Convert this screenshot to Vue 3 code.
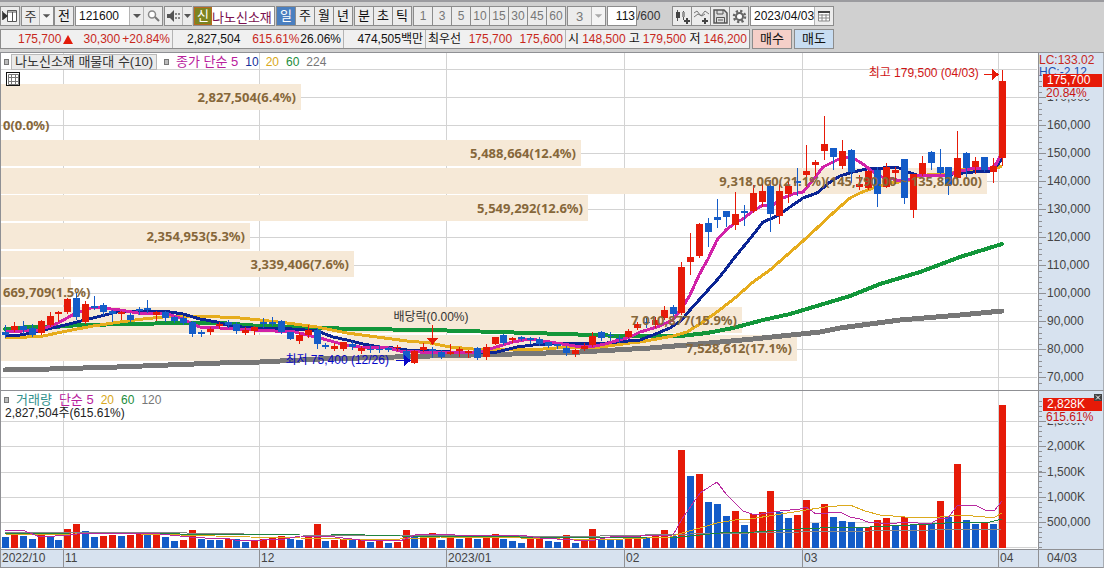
<script setup>
import { ref } from 'vue'

const PLOT_W = 1038
const PRICE_TOP = 53
const VOL_TOP = 391

const code = ref('121600')
const stockName = ref('나노신소재')
const count = ref('113')
const date = ref('2023/04/03')

const periods = ['일', '주', '월', '년']
const intraday = ['분', '초', '틱']
const minutes = ['1', '3', '5', '10', '15', '30', '45', '60']

// direction, high, body top, body bottom, low
const candles = `
B325,332,335,337 R322,326,330,331 B321,326,330,333 B324,328,335,336 R320,321,333,334
R312,316,325,326 R311,312,314,321 R298,299,312,313 B293,298,317,319 R301,304,322,323
B296,306,308,309 B303,305,312,315 B310,311,314,321 R311,312,314,319 B313,315,320,321
B307,309,311,314 B300,308,310,312 R311,312,315,320 B311,312,318,321 B316,317,321,322
B316,318,323,324 B321,322,334,336 B330,332,334,336 R327,329,332,334 R322,324,326,328
B320,322,325,327 B322,324,331,333 R327,330,333,334 R326,327,331,334 B318,322,324,327
B317,322,324,325 B320,321,332,333 B332,332,339,339 R332,335,341,343 R325,330,335,337
B328,330,344,348 B343,345,347,348 R343,346,349,350 R342,342,349,350 B341,344,347,349
R346,348,351,353 B345,349,350,352 B345,349,350,352 B347,348,350,351 R345,347,348,350
B350,351,359,362 R350,351,363,363 R343,347,350,351 B347,349,351,357 B350,352,357,358
R344,352,354,354 R347,349,351,356 R350,351,353,357 B347,348,358,359 R344,347,357,359
R337,337,344,344 B334,335,343,344 R337,338,340,342 B336,337,339,340 B337,338,340,343
B337,339,344,345 B342,342,346,347 B344,344,346,348 B346,348,353,355 R349,350,354,356
R343,346,349,350 R332,336,345,346 B331,332,338,340 B332,335,336,340 B335,338,339,342
R329,331,337,337 R322,324,328,329 B318,322,323,327 R317,320,325,327 R306,310,318,319
B305,307,314,316 R262,267,313,314 R233,257,262,274 R223,224,256,257 B218,223,232,246
B199,217,220,227 B211,211,217,226 R192,214,225,229 B205,211,213,225 R185,193,211,212
R184,191,202,206 B180,186,214,231 R184,191,216,223 R178,186,194,202 B168,181,183,195
R145,171,175,186 R160,162,165,175 R116,144,151,159 B148,148,157,169 R140,151,166,168
B149,150,172,182 R175,184,187,189 R170,171,188,189 B167,170,194,206 R163,167,187,187
R167,170,173,183 B159,159,198,203 R174,174,210,217 R156,163,174,175 B151,152,163,169
B149,167,173,173 B167,167,185,194 R131,158,178,178 B152,153,168,178 R157,161,167,173
B157,157,170,171 R158,166,172,182 R70,81,158,165`.trim().split(/\s+/).map((s, i) => {
  const [high, top, bottom, low] = s.slice(1).split(',').map(Number)
  return { x: Math.round(2 + i * 8.9), up: s[0] === 'R', high, top, bottom, low }
})

const volumes = `
B537 R535 B536 B539 R533 B536 B540 R529 R524 B531 B537 R536 R535 B536 R535 R534 B534 R532 B537 B541
R540 R530 B539 B540 B540 R539 B539 B542 R541 R539 R538 R536 B539 B540 R536 R524 B541 R540 R539 B540
R539 B542 R541 B543 R542 R530 B537 R534 R533 B540 R538 B539 R538 B539 R538 R534 B539 B541 B543 R539
R538 B541 B542 R535 B543 R540 R529 B539 B539 B540 R536 R536 B538 R536 R530 B536 R450 B476 R474 B502
B504 B516 R511 B525 R514 R512 R491 B512 B518 R515 R500 B523 R504 B517 B521 B522 B527 R527 R520 R518
B526 R517 B524 R523 B524 R501 B517 R464 B520 B524 R523 B524 R405`.trim().split(/\s+/).map((s, i) => ({
  x: Math.round(2 + i * 8.9), up: s[0] === 'R', top: Number(s.slice(1)),
}))

const priceLines = [
  { cls: 'ma224', pts: '5,370 50,369 117,367 220,363 260,362 320,359 360,358 430,356 513,354 580,352 650,348 687,345 753,339 820,332 840,328 870,324 900,320 960,315 1002,311' },
  { cls: 'ma60', pts: '5,329 30,327 53,327 80,325 133,324 177,323 220,323 260,326 297,327 353,329 430,330 497,332 563,334 623,336 680,336 707,333 733,328 763,320 790,314 820,305 850,296 880,284 920,272 960,257 1002,244' },
  { cls: 'ma20', pts: '5,338 27,337 43,336 67,331 93,326 120,322 143,319 163,317 183,316 220,317 240,318 260,320 287,323 317,327 347,333 377,337 407,341 430,343 450,347 473,349 543,349 570,347 600,347 630,343 640,342 673,336 687,332 703,322 717,312 735,298 753,282 770,270 787,255 803,241 817,228 833,213 850,198 860,193 873,188 890,183 907,181 917,177 933,174 950,174 960,170 980,169 997,168 1002,166' },
  { cls: 'ma10', pts: '5,335 20,335 32,333 43,330 57,327 77,322 97,317 117,312 133,311 150,311 170,312 183,314 200,319 217,322 230,326 253,328 280,328 317,331 333,337 347,340 363,344 380,347 393,348 407,350 430,351 450,352 497,352 517,347 533,345 563,343 597,344 617,342 640,340 653,335 670,328 682,320 690,310 699,300 708,290 717,280 726,269 735,257 753,235 763,222 777,216 790,207 803,198 817,193 830,182 840,176 853,172 867,169 883,168 897,167 907,172 917,175 940,176 953,174 973,172 990,171 997,166 1002,158' },
  { cls: 'ma5', pts: '5,332 40,330 58,323 76,313 94,307 120,310 138,313 165,313 180,318 200,327 220,328 255,330 295,332 320,338 345,345 360,347 385,347 400,351 420,352 480,352 496,347 513,342 530,339 550,342 575,346 590,347 605,344 630,337 640,332 657,327 673,320 682,308 690,295 699,275 708,259 717,240 726,230 735,223 743,219 753,211 763,205 773,205 783,198 793,194 803,192 813,180 823,167 833,162 843,157 853,158 863,164 873,172 882,177 890,178 900,181 910,179 917,175 933,175 943,176 957,172 970,169 983,168 992,168 997,163 1002,152' },
]
const volumeLines = [
  { cls: 'v120', pts: '5,532 130,532 300,535 520,536 600,536 690,534 750,533 800,532 870,531 930,530 1002,529' },
  { cls: 'v60', pts: '5,534 70,533 130,533 230,535 300,534 330,534 400,536 520,537 600,537 670,538 690,536 720,533 755,532 780,530 820,528 870,527 930,524 960,522 990,522 1002,519' },
  { cls: 'v20', pts: '5,534 50,535 100,533 180,535 250,537 300,538 380,540 440,537 520,538 600,540 670,537 682,533 700,528 717,523 735,520 750,519 775,515 800,511 825,507 850,505 865,511 880,515 905,517 940,517 960,515 985,517 995,517 1002,513' },
  { cls: 'v5', pts: '5,531 22,530 30,533 40,537 70,535 85,533 130,533 160,534 190,537 205,538 225,538 240,541 285,539 300,536 335,537 360,540 400,541 415,535 440,534 470,536 520,535 540,538 590,541 610,537 640,536 673,535 682,519 700,493 717,482 726,494 743,511 755,515 780,511 800,509 806,507 816,514 840,512 850,517 860,519 868,522 890,524 905,522 930,524 940,518 948,518 957,506 975,505 985,510 994,511 1002,501' },
]

// volume-by-price bands: top, right edge, caption
const bands = [
  { y: 84, end: 300, text: '2,827,504(6.4%)' },
  { y: 112, end: 0, text: '0(0.0%)' },
  { y: 140, end: 580, text: '5,488,664(12.4%)' },
  { y: 168, end: 986, text: '9,318,060(21.1%)(145,790.00 ~ 135,820.00)' },
  { y: 195, end: 587, text: '5,549,292(12.6%)' },
  { y: 223, end: 249, text: '2,354,953(5.3%)' },
  { y: 251, end: 353, text: '3,339,406(7.6%)' },
  { y: 279, end: 70, text: '669,709(1.5%)' },
  { y: 307, end: 741, text: '7,010,877(15.9%)' },
  { y: 335, end: 796, text: '7,528,612(17.1%)' },
]
const months = [
  { x: 0, text: '2022/10' }, { x: 63, text: '11' }, { x: 259, text: '12' },
  { x: 446, text: '2023/01' }, { x: 624, text: '02' }, { x: 802, text: '03' }, { x: 998, text: '04' },
]
const priceGrid = Array.from({ length: 12 }, (_, i) => 69 + i * 28)
const volumeGrid = [421, 446, 472, 497, 522, 547]
const priceTicks = Array.from({ length: 11 }, (_, i) => ({ y: 97 + i * 28, text: `${170 - i * 10},000` }))
const volumeTicks = [
  { y: 421, text: '2,500K' }, { y: 446, text: '2,000K' }, { y: 472, text: '1,500K' },
  { y: 497, text: '1,000K' }, { y: 522, text: '500,000' },
]
const priceMinor = Array.from({ length: 56 }, (_, i) => Math.round(75 + i * 5.6))
const volumeMinor = Array.from({ length: 30 }, (_, i) => Math.round(547 - i * 5.04))

const pct = x => `${(x / PLOT_W) * 100}%`
function bandStyle(b) {
  const top = `${b.y + 4 - PRICE_TOP}px`
  return b.end < 100 ? { top, left: '3px' } : { top, right: `${((PLOT_W - b.end + 4) / PLOT_W) * 100}%` }
}
</script>

<template>
  <main class="app">
    <header class="head">
      <div class="toolbar">
        <button class="btn w20" aria-label="패널">
          <svg width="16" height="14" viewBox="0 0 16 14"><path d="M5.500 1.500h9v11h-9zM5 3h10M10.500 3v10" fill="#fff" stroke="#555" /><path d="M.5 2v9" stroke="#555" /><path d="M1 3l5 4-5 4z" fill="#333" /></svg>
        </button>
        <div class="combo w33 gap">
          <select class="pick" aria-label="종류"><option>주</option></select>
          <svg class="arrow" width="14" height="18" viewBox="0 0 14 18"><path d="M3 7h8l-4 4z" fill="#555" /></svg>
        </div>
        <button class="btn w20">전</button>
        <div class="combo w88 gap">
          <input v-model="code" class="field" aria-label="종목코드" />
          <button class="part" aria-label="목록"><svg width="13" height="18" viewBox="0 0 13 18"><path d="M3 7h8l-4 4z" fill="#555" /></svg></button>
          <button class="part wide" aria-label="검색"><svg width="16" height="16" viewBox="0 0 16 16"><circle cx="7" cy="6.500" r="3.500" fill="#fff" stroke="#888" stroke-width="1.500" /><path d="M10 9l4 4" stroke="#777" stroke-width="2" /></svg></button>
        </div>
        <div class="combo w28 gap">
          <button class="part wide" aria-label="소리"><svg width="16" height="16" viewBox="0 0 16 16"><path d="M1 6h3l4-4v12l-4-4H1z" fill="#555" /><path d="M10 5v2M10 9v2M13 5v2M13 9v2" stroke="#666" stroke-width="1.500" /></svg></button>
          <button class="part" aria-label="소리 설정"><svg width="9" height="18" viewBox="0 0 9 18"><path d="M1 7h7l-3.500 4z" fill="#555" /></svg></button>
        </div>
        <div class="combo w82 gap">
          <span class="mark">신</span>
          <input v-model="stockName" class="field name" aria-label="종목명" />
        </div>
        <div class="group gap"><button v-for="(p, i) in periods" :key="p" class="seg" :class="{ on: i === 0 }">{{ p }}</button></div>
        <div class="group gap"><button v-for="p in intraday" :key="p" class="seg">{{ p }}</button></div>
        <div class="group gap"><button v-for="m in minutes" :key="m" class="seg dim">{{ m }}</button></div>
        <div class="combo w39 gap">
          <select class="pick dim" aria-label="분 단위"><option>3</option></select>
          <svg class="arrow" width="14" height="18" viewBox="0 0 14 18"><path d="M3 7h8l-4 4z" fill="#aaa" /></svg>
        </div>
        <label class="count gap"><input v-model="count" class="field boxed" /><span>/600</span></label>
        <div class="group">
          <button class="seg" aria-label="봉 추가"><svg width="17" height="17" viewBox="0 0 17 17"><path d="M3.500 2v11M9.500 3v9" stroke="#555" /><path d="M2 4h4v6H2z" fill="#444" /><path d="M8 4h3v5H8z" fill="#999" /><path d="M10 13h6M13 10v6" stroke="#444" stroke-width="2" /></svg></button>
          <button class="seg" aria-label="지표 추가"><svg width="17" height="17" viewBox="0 0 17 17"><path d="M1 5l3-2 4 5 4-5 4 3M1 9l4-3 4 2 3-2" fill="none" stroke="#777" /><path d="M9 13h6M12 10v6" stroke="#444" stroke-width="2" /></svg></button>
          <button class="seg" aria-label="저장"><svg width="17" height="17" viewBox="0 0 17 17"><path d="M2 2h10l3 3v10H2z" fill="#ddd" stroke="#555" stroke-width="1.500" /><path d="M5 2v4h6V2M4.500 15V9.500h8V15M6 12h5" fill="none" stroke="#555" /></svg></button>
          <button class="seg" aria-label="설정"><svg width="17" height="17" viewBox="0 0 17 17"><circle cx="8.500" cy="8.500" r="5.500" fill="none" stroke="#666" stroke-width="2.500" stroke-dasharray="2.200 2.120" /><circle cx="8.500" cy="8.500" r="3.500" fill="#fff" stroke="#666" stroke-width="2" /></svg></button>
        </div>
        <div class="combo w84 gap">
          <input v-model="date" class="field" aria-label="날짜" />
          <button class="part wide" aria-label="달력"><svg width="14" height="14" viewBox="0 0 14 14"><path d="M1.500 3h11v9h-11zM2 6h10M2 9h10M5 5v7M9 5v7" fill="#fff" stroke="#888" /><path d="M1 2h12v2H1z" fill="#444" /></svg></button>
        </div>
      </div>
      <div class="quote">
        <div class="cells">
          <div class="cell c1 red"><span>175,700</span><svg width="10" height="9" viewBox="0 0 10 9"><path d="M5 0l5 9H0z" fill="#e31b0a" /></svg><span class="diff">30,300</span><span>+20.84%</span></div>
          <div class="cell c2"><span>2,827,504</span><span class="red ratio">615.61%</span><span>26.06%</span></div>
          <div class="cell c3"><span>474,505백만</span></div>
          <div class="cell c4"><span>최우선</span><span class="red">175,700</span><span class="red">175,600</span></div>
          <div class="cell c5"><span>시</span><span class="red">148,500</span><span>고</span><span class="red">179,500</span><span>저</span><span class="red">146,200</span></div>
        </div>
        <button class="trade buy">매수</button>
        <button class="trade sell">매도</button>
      </div>
    </header>

    <section class="chart">
      <div class="pane price">
        <svg class="plot" viewBox="0 53 1038 337" preserveAspectRatio="none">
          <g class="grid">
            <rect v-for="y in priceGrid" :key="y" x="1" :y="y" width="1036" height="1" />
            <rect v-for="m in months.slice(1)" :key="m.x" :x="m.x" y="53" width="1" height="337" />
          </g>
          <rect v-for="b in bands" :key="b.y" class="band" x="1" :y="b.y" :width="b.end" height="26" />
          <polyline v-for="l in priceLines" :key="l.cls" class="line" :class="l.cls" :points="l.pts" />
          <g v-for="c in candles" :key="c.x" :class="c.up ? 'up' : 'down'">
            <rect :x="c.x + 3" :y="c.high" width="1" :height="c.low - c.high + 1" />
            <rect :x="c.x" :y="c.top" width="7" :height="Math.max(c.bottom - c.top, 1)" />
          </g>
          <path class="up" d="M984 74h8v-5l7 5.500-7 5.500v-5h-8z" />
          <path class="up" d="M432 325h1v13h5l-5.500 7-5.500-7h5z" />
          <path class="low" d="M396 360h8v-5l7 5.500-7 5.500v-5h-8z" />
        </svg>
        <span v-for="b in bands" :key="b.y" class="tag bandtext" :style="bandStyle(b)">{{ b.text }}</span>
        <span class="tag high">최고 179,500 (04/03)</span>
        <span class="tag lowest">최저 75,400 (12/26)</span>
        <span class="tag exdiv">배당락(0.00%)</span>
        <div class="legend">
          <i class="dot"></i><span class="chip">나노신소재 매물대 수(10)</span>
          <i class="dot"></i><span class="k5">종가 단순 5</span><span class="k10">10</span><span class="k20">20</span><span class="k60">60</span><span class="k120">224</span>
        </div>
        <button class="tablebtn" aria-label="표"><svg width="11" height="11" viewBox="0 0 11 11"><path d="M.5.5h10v10H.5zM0 3.500h11M0 7.500h11M3.500 0v11M7.500 0v11" fill="none" stroke="#777" /></svg></button>
      </div>
      <div class="axis price">
        <svg class="ticks" width="8" viewBox="0 53 8 337" preserveAspectRatio="none">
          <rect v-for="y in priceMinor" :key="y" x="0" :y="y" width="3" height="1" />
          <rect v-for="t in priceTicks" :key="t.y" x="0" :y="t.y" width="7" height="1" />
        </svg>
        <span v-for="t in priceTicks" :key="t.y" class="tick" :style="{ top: `${t.y - 8 - PRICE_TOP}px` }">{{ t.text }}</span>
        <div class="limits"><span class="red">LC:133.02</span><span class="blue">HC:-2.12</span></div>
        <div class="now"><b>175,700</b><span>20.84%</span></div>
      </div>

      <div class="pane volume">
        <svg class="plot" viewBox="0 391 1038 158" preserveAspectRatio="none">
          <g class="grid">
            <rect v-for="y in volumeGrid" :key="y" x="1" :y="y" width="1036" height="1" />
            <rect v-for="m in months.slice(1)" :key="m.x" :x="m.x" y="391" width="1" height="158" />
          </g>
          <rect v-for="v in volumes" :key="v.x" :class="v.up ? 'up' : 'down'" :x="v.x" :y="v.top" width="7" :height="548 - v.top" />
          <polyline v-for="l in volumeLines" :key="l.cls" class="thin" :class="l.cls" :points="l.pts" />
        </svg>
        <div class="legend vol">
          <i class="dot"></i><span class="teal">거래량</span><span class="k5">단순 5</span><span class="k20">20</span><span class="k60">60</span><span class="k120">120</span>
        </div>
        <div class="total">2,827,504주(615.61%)</div>
      </div>
      <div class="axis volume">
        <svg class="ticks" width="8" viewBox="0 391 8 158" preserveAspectRatio="none">
          <rect v-for="y in volumeMinor" :key="y" x="0" :y="y" width="3" height="1" />
          <rect v-for="t in volumeTicks" :key="t.y" x="0" :y="t.y" width="7" height="1" />
        </svg>
        <span v-for="t in volumeTicks" :key="t.y" class="tick" :style="{ top: `${t.y - 8 - VOL_TOP}px` }">{{ t.text }}</span>
        <div class="now vnow"><b>2,828K</b><span>615.61%</span></div>
        <button class="close" aria-label="닫기"><svg width="8" height="7" viewBox="0 0 8 7"><path d="M2 1.500l4 4M6 1.500l-4 4" stroke="#fff" /></svg></button>
      </div>

      <div class="dates">
        <span v-for="m in months" :key="m.x" class="month" :style="{ left: pct(m.x) }">{{ m.text }}</span>
      </div>
      <div class="dates today">04/03</div>
    </section>
  </main>
</template>

<style>
body { margin: 0; background: #d0d0d0; }
</style>

<style scoped>
.app, .app button, .app input, .app select {
  font-family: "Liberation Sans", "Noto Sans CJK KR", sans-serif;
  font-size: 12px;
}
.app { background: #d0d0d0; border-top: 2px solid #9b9b9f; color: #111; line-height: 16px; white-space: nowrap; overflow: hidden; }
.app *, .app { box-sizing: border-box; }
.head { padding-top: 4px; }
.toolbar { display: flex; height: 20px; align-items: stretch; }
.gap { margin-left: 1px; }
.btn, .seg, .part { display: flex; align-items: center; justify-content: center; padding: 0; margin: 0; background: #ececec; color: #111; line-height: 16px; flex: none; }
.app .btn, .app .seg, .app .pick, .app .trade { font-size: 13px; }
.app .seg.dim { font-size: 12px; }
.btn { border: 1px solid #8c8c8c; }
.w20 { width: 20px; }
.w28 { width: 28px; }
.w33 { width: 33px; }
.w39 { width: 39px; }
.w82 { width: 82px; }
.w84 { width: 84px; }
.w88 { width: 88px; }
.combo { display: flex; flex: none; border: 1px solid #8c8c8c; background: #ececec; }
.pick { appearance: none; flex: 1; min-width: 0; border: 0; padding: 0; background: #ececec; color: #333; text-align: center; text-align-last: center; outline: 0; }
.arrow { flex: none; border-left: 1px solid #b4b4b4; background: #f4f4f4; }
.field { flex: 1; min-width: 0; border: 0; padding: 0 0 0 3px; background: #fff; color: #111; outline: 0; }
.app .field.name { font-size: 13px; color: #7a1150; padding: 0; }
.field.boxed { flex: none; width: 30px; border: 1px solid #8c8c8c; padding: 0 1px; text-align: right; }
.part { border: 0; border-left: 1px solid #b4b4b4; }
.part.wide { width: 19px; }
.part:first-child { border-left: 0; width: 17px; }
.mark { flex: none; width: 18px; background: #7d8420; color: #fff; border: 1px solid #b8691e; text-align: center; font-size: 13px; }
.group { display: flex; flex: none; border-right: 1px solid #8c8c8c; }
.seg { width: 19px; border: 1px solid #8c8c8c; border-right: 0; }
.seg.on { background: #4a7fc0; color: #fff; }
.dim, .seg.dim { color: #777; }
.count { display: flex; flex: none; width: 65px; align-items: center; color: #333; }
.count .field { height: 20px; }

.quote { display: flex; gap: 2px; height: 20px; margin-top: 3px; }
.cells { display: flex; width: 750px; flex: none; border: 1px solid #8c8c8c; background: #f0f0f0; }
.cell { display: flex; flex: none; align-items: center; justify-content: space-between; padding: 0 2px; border-right: 1px solid #b4b4b4; }
.cell:last-child { border-right: 0; }
.c1 { width: 172px; padding-left: 17px; }
.c2 { width: 171px; padding-left: 14px; }
.c3 { width: 82px; justify-content: flex-end; }
.c4 { width: 140px; }
.c5 { width: 183px; }
.diff { margin-left: 8px; }
.ratio { margin-left: 11px; }
.quote .cell span { line-height: 18px; }
.red { color: #c8281c; }
.blue { color: #1d4fb4; }
.trade { width: 40px; padding: 0; border: 1px solid #8c8c8c; color: #111; line-height: 16px; }
.buy { background: #f5cfc8; }
.sell { background: #c8ddf2; }

.chart { display: grid; grid-template-columns: 1fr 66px; margin-top: 3px; border-top: 1px solid #8f9094; }
.pane { position: relative; background: #fff; border-bottom: 1px solid #8f9094; overflow: hidden; box-shadow: inset 1px 0 #8f9094; }
.price { height: 338px; }
.volume { height: 159px; }
.plot { display: block; width: 100%; height: 100%; shape-rendering: crispEdges; }
.grid rect { fill: #d3d3d3; }
.band { fill: #f6e9d7; }
.up { fill: #e61a08; }
.down { fill: #145cc8; }
.low { fill: #0909c8; }
.line, .thin { fill: none; stroke-linejoin: round; }
.thin { stroke-width: 1; }
.ma224 { stroke: #777; stroke-width: 5; stroke-linecap: round; }
.ma60 { stroke: #12963a; stroke-width: 4; stroke-linecap: round; }
.ma20 { stroke: #e6ac1c; stroke-width: 3; }
.ma10 { stroke: #0b2594; stroke-width: 3; }
.ma5 { stroke: #d122a8; stroke-width: 3; }
.v5 { stroke: #b82aa0; }
.v20 { stroke: #dcaa1e; }
.v60 { stroke: #1f8440; }
.v120 { stroke: #858585; }

.tag { position: absolute; }
.bandtext { font-family: "Noto Sans", sans-serif; font-weight: 700; font-size: 13px; line-height: 18px; color: #86673a; }
.high { top: 12px; right: 5.7%; color: #d01414; }
.lowest { top: 299px; left: 27.5%; color: #0909c8; }
.exdiv { top: 256px; left: 37.9%; color: #333; }
.legend { position: absolute; top: 0; left: 4px; display: flex; align-items: center; height: 17px; gap: 7px; }
.dot { width: 5px; height: 6px; border: 1px solid #777; background: #bbb; }
.chip { margin-left: -5px; padding: 0 3px; border: 1px solid #b9b9b9; background: #eaeaea; line-height: 14px; color: #333; font-size: 13px; }
.teal, .k5 { font-size: 13px; }
.teal { color: #2f8f8c; }
.k5 { color: #b8209c; }
.k10 { color: #14309c; }
.k20 { color: #d8a820; }
.k60 { color: #1c8c3c; }
.k120 { color: #777; }
.tablebtn { position: absolute; left: 6px; top: 19px; width: 14px; height: 14px; padding: 0; border: 1px solid #111; background: #fff; display: flex; align-items: center; justify-content: center; }
.total { position: absolute; left: 5px; top: 14px; color: #222; }

.axis { position: relative; background: #d7e2ef; border-left: 1px solid #8f9094; border-right: 1px solid #a8adb4; border-bottom: 1px solid #8f9094; color: #444; overflow: hidden; }
.ticks { position: absolute; left: 0; top: 0; height: 100%; fill: #8f9094; shape-rendering: crispEdges; }
.tick { position: absolute; left: 8px; }
.limits { position: absolute; left: 0; top: 1px; display: flex; flex-direction: column; line-height: 12px; }
.now { position: absolute; left: 4px; right: 1px; top: 21px; display: flex; flex-direction: column; line-height: 12px; color: #c81414; }
.now b { padding-left: 4px; background: #e61a08; color: #fff; font-weight: 400; line-height: 13px; }
.now span { margin-left: 3px; background: #d7e2ef; }
.vnow { top: 7px; }
.close { position: absolute; right: 1px; top: 3px; width: 8px; height: 7px; padding: 0; border: 0; background: #444; display: flex; }

.dates { position: relative; height: 18px; background: #d7e2ef; border-bottom: 1px solid #8f9094; color: #444; overflow: hidden; box-shadow: inset 1px 0 #8f9094; }
.month { position: absolute; top: 0; height: 18px; line-height: 17px; padding-left: 1px; border-left: 1px solid #8f9094; }
.today { line-height: 17px; padding-left: 9px; border-right: 1px solid #a8adb4; }
</style>
